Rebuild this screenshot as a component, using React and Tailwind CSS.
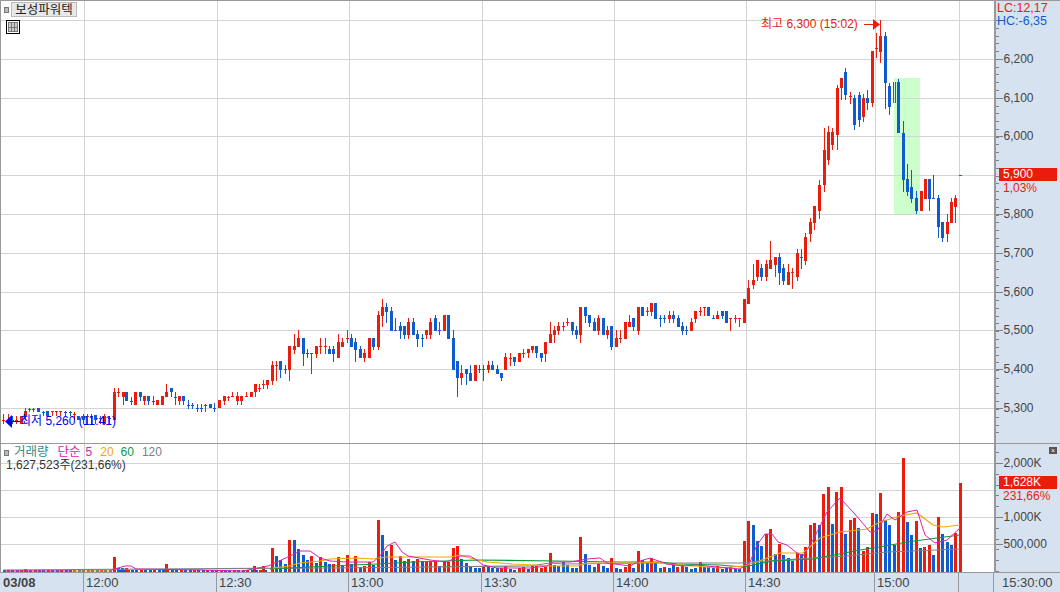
import React from 'react'

const RED = '#ec1c0c'
const BLUE = '#0e5ccf'

// candles: [u, color, bodyTop, bodyBottom, wickTop, wickBottom], u is 3x pixels from the segment base
const seg = (base, rows) => rows.map(([u, c, t, b, wt, wb]) => ({ x: Math.round(base + u / 3), c, t, b, wt: wt ?? t, wb: wb ?? b }))

const candles = [
  ...seg(0, [
    [9, 'r', 420, 420, 414, 424], [24, 'r', 420, 420, 414, 424], [36, 'b', 420, 420, 416, 424], [48, 'r', 420, 420, 416, 424], [62, 'r', 416, 424],
    [75, 'r', 411, 416, 408, 420], [87, 'r', 409, 409, 408, 412], [100, 'r', 409, 409, 408, 412], [114, 'b', 408, 412], [128, 'b', 412, 412, 411, 416],
    [142, 'b', 411, 416], [155, 'r', 411, 411, 411, 416], [167, 'r', 411, 411, 411, 416], [180, 'r', 411, 411, 411, 416], [195, 'b', 412, 412, 411, 416],
    [209, 'b', 412, 412, 411, 416], [222, 'r', 414, 414, 412, 420], [235, 'b', 416, 420], [248, 'b', 416, 420, 414, 424], [260, 'r', 416, 416, 414, 424],
    [272, 'b', 416, 416, 414, 424], [285, 'b', 415, 420, 415, 424], [299, 'b', 418, 418, 416, 424], [312, 'r', 416, 424, 414, 425], [326, 'b', 418, 418, 416, 424],
  ]),
  ...seg(100, [
    [41, 'r', 392, 420, 388, 420], [53, 'r', 392, 392, 388, 397], [68, 'r', 392, 397, 392, 405], [79, 'b', 392, 401], [92, 'b', 401, 401, 397, 405],
    [106, 'r', 392, 405], [119, 'b', 392, 397, 392, 401], [133, 'r', 396, 401, 396, 405], [145, 'b', 396, 401, 396, 405], [160, 'b', 401, 401, 396, 405],
    [172, 'r', 400, 405], [185, 'r', 396, 405], [199, 'r', 392, 397, 384, 397], [212, 'b', 388, 392, 388, 397], [226, 'b', 397, 397, 392, 405],
    [238, 'r', 396, 401, 396, 405], [250, 'b', 396, 401, 396, 405], [265, 'b', 405, 405, 400, 409], [277, 'b', 405, 405, 403, 409], [291, 'b', 408, 408, 404, 412],
    [304, 'b', 408, 408, 404, 412], [316, 'r', 405, 405, 404, 412], [331, 'b', 404, 408, 404, 408], [343, 'b', 408, 408, 403, 412], [358, 'r', 400, 408],
    [371, 'r', 396, 401, 396, 405], [385, 'r', 397, 397, 396, 401], [397, 'r', 396, 396, 392, 397], [410, 'r', 396, 401, 392, 405], [424, 'r', 396, 401, 396, 405],
    [437, 'r', 396, 396, 392, 397], [452, 'r', 392, 397], [464, 'r', 384, 392, 384, 397], [476, 'r', 388, 388, 384, 392], [490, 'r', 384, 384, 380, 389],
  ]),
  ...seg(260, [
    [22, 'r', 380, 385, 380, 389], [37, 'r', 365, 381, 361, 385], [49, 'r', 365, 365, 361, 381], [61, 'b', 361, 370, 361, 378], [76, 'b', 369, 369, 365, 374],
    [88, 'r', 346, 370, 346, 381], [103, 'r', 346, 350, 334, 354], [115, 'r', 338, 347, 330, 347], [130, 'b', 338, 354, 338, 366], [142, 'b', 353, 353, 349, 358],
    [154, 'b', 353, 353, 353, 374], [169, 'r', 346, 354, 346, 358], [181, 'r', 346, 346, 338, 354], [196, 'r', 346, 346, 338, 354], [208, 'b', 349, 354, 346, 354],
    [220, 'b', 349, 354, 346, 362], [235, 'r', 342, 358, 334, 358], [247, 'r', 342, 347, 338, 347], [262, 'r', 338, 338, 330, 343], [274, 'b', 338, 347, 334, 347],
    [286, 'b', 342, 350, 338, 362], [301, 'b', 349, 358, 346, 358], [313, 'r', 353, 358, 349, 362], [328, 'r', 338, 358], [340, 'b', 338, 347, 338, 350],
    [355, 'r', 315, 347, 311, 350], [367, 'r', 307, 316, 299, 327], [379, 'b', 307, 312, 303, 323], [394, 'b', 311, 331, 307, 331], [406, 'b', 330, 330, 318, 331],
    [421, 'b', 326, 331, 322, 339], [433, 'b', 326, 335, 326, 339], [445, 'r', 322, 335, 318, 339], [460, 'b', 322, 335, 318, 335], [472, 'b', 334, 339, 330, 347],
    [487, 'b', 338, 338, 334, 347], [499, 'r', 330, 335, 330, 339], [511, 'r', 322, 335, 318, 339], [526, 'b', 318, 331, 315, 331], [538, 'b', 330, 330, 322, 335],
    [553, 'r', 315, 331], [565, 'b', 315, 339], [580, 'b', 338, 370, 330, 370], [592, 'b', 361, 378, 361, 397], [604, 'r', 373, 378, 365, 385],
    [619, 'b', 369, 374, 369, 385], [631, 'b', 373, 381, 365, 381], [646, 'r', 365, 381], [658, 'b', 369, 369, 365, 373], [670, 'b', 369, 369, 365, 381],
    [685, 'r', 365, 370, 361, 373], [697, 'b', 365, 370, 361, 370], [712, 'b', 369, 374, 365, 374], [724, 'b', 373, 378, 373, 381],
  ]),
  ...seg(500, [
    [16, 'r', 357, 370, 353, 370], [31, 'r', 358, 358, 353, 366], [43, 'b', 357, 362, 357, 366], [58, 'r', 353, 362], [70, 'r', 353, 353, 349, 358],
    [85, 'r', 349, 353, 349, 358], [97, 'r', 346, 350, 346, 353], [109, 'b', 346, 353, 346, 358], [124, 'b', 353, 358, 353, 362], [136, 'r', 342, 354, 342, 362],
    [151, 'r', 334, 343, 322, 343], [163, 'r', 330, 335, 326, 343], [175, 'r', 326, 331, 322, 335], [190, 'r', 326, 326, 322, 331], [202, 'r', 322, 322, 318, 326],
    [217, 'b', 322, 331, 322, 335], [229, 'b', 330, 335, 326, 339], [241, 'r', 307, 335, 307, 343], [256, 'b', 307, 316, 307, 323], [268, 'b', 315, 323, 315, 327],
    [283, 'b', 322, 331, 318, 331], [295, 'r', 318, 331, 315, 335], [310, 'b', 318, 335], [322, 'r', 330, 335, 326, 339], [334, 'b', 326, 347, 326, 350],
    [349, 'r', 338, 347, 330, 347], [361, 'r', 338, 338, 330, 343], [376, 'r', 322, 339], [388, 'r', 322, 327, 315, 327], [400, 'b', 318, 327, 318, 331],
    [415, 'r', 307, 331, 307, 335], [427, 'b', 307, 316], [442, 'r', 311, 311, 307, 316], [454, 'r', 303, 312, 303, 316], [466, 'b', 303, 319],
    [481, 'b', 318, 318, 315, 327], [493, 'b', 318, 318, 315, 323], [508, 'r', 315, 319, 311, 323], [520, 'b', 315, 319, 311, 323], [535, 'b', 318, 327, 315, 327],
    [547, 'b', 326, 331, 322, 335], [559, 'b', 330, 330, 326, 335], [574, 'r', 322, 331, 318, 331], [586, 'r', 311, 319, 311, 323], [601, 'r', 311, 311, 307, 316],
    [613, 'r', 307, 307, 307, 316], [625, 'b', 307, 316], [640, 'b', 318, 318, 315, 319], [652, 'r', 315, 319, 311, 319], [667, 'b', 311, 316, 311, 319],
    [679, 'b', 311, 323], [691, 'r', 318, 318, 318, 331], [706, 'r', 318, 318, 315, 323], [718, 'r', 318, 318, 318, 327],
  ]),
  ...seg(730, [
    [43, 'r', 299, 323], [55, 'r', 288, 304, 280, 304], [70, 'r', 280, 285, 264, 289], [82, 'r', 260, 277, 260, 281], [94, 'b', 268, 277, 264, 281],
    [109, 'r', 264, 277, 260, 281], [121, 'r', 260, 269, 241, 269], [136, 'r', 257, 265, 257, 277], [148, 'b', 257, 273, 253, 285], [160, 'b', 268, 281, 264, 285],
    [175, 'r', 272, 285, 264, 285], [187, 'r', 272, 272, 268, 289], [202, 'r', 253, 277, 249, 281], [214, 'b', 257, 257, 249, 269], [226, 'r', 237, 261, 233, 265],
    [241, 'r', 222, 234, 218, 242], [253, 'r', 206, 223, 206, 230], [268, 'r', 185, 211, 180, 219],
  ]),
  ...seg(820, [
    [12, 'r', 150, 185, 128, 192], [25, 'r', 132, 160, 126, 165], [37, 'r', 132, 145, 128, 150], [51, 'r', 88, 135, 85, 150], [64, 'r', 78, 88, 78, 100],
    [76, 'b', 72, 95, 68, 100], [90, 'r', 96, 96, 92, 104], [103, 'b', 98, 125, 95, 130], [117, 'b', 95, 120, 92, 127],
  ]),
  ...seg(860, [
    [10, 'r', 98, 117, 94, 122], [22, 'b', 98, 103, 90, 110], [36, 'r', 51, 103, 51, 107], [49, 'r', 48, 48, 33, 58], [61, 'r', 36, 52, 20, 63],
    [76, 'b', 36, 83, 32, 109], [88, 'b', 86, 107, 83, 115], [115, 'b', 82, 133, 79, 133], [130, 'b', 133, 180, 121, 192], [142, 'b', 179, 192, 164, 196],
    [154, 'b', 187, 199, 170, 203], [169, 'b', 198, 211, 191, 214], [182, 'r', 191, 211], [196, 'r', 179, 199], [208, 'b', 179, 199, 179, 211],
    [220, 'b', 198, 198, 175, 199], [235, 'b', 198, 227, 195, 238], [247, 'b', 222, 238, 222, 242], [262, 'r', 222, 234, 214, 242], [274, 'r', 202, 223, 198, 223],
    [286, 'r', 198, 207, 195, 223], [300, 'r', 175, 175, 175, 176],
  ]),
]

// volume bars: [x, color, top]
const bars = [
  [25, 'r', 569], [114, 'r', 557], [118, 'b', 568], [122, 'b', 568], [126, 'r', 568], [166, 'r', 564], [254, 'r', 566], [263, 'r', 566], [272, 'r', 548], [276, 'b', 556],
  [280, 'b', 560], [285, 'b', 564], [289, 'r', 540], [294, 'b', 540], [298, 'b', 549], [303, 'b', 555], [307, 'b', 560], [311, 'r', 556], [316, 'b', 563], [320, 'r', 557],
  [325, 'b', 562], [329, 'b', 564], [333, 'r', 564], [338, 'r', 557], [342, 'b', 566], [347, 'r', 555], [351, 'b', 564], [355, 'r', 556], [360, 'b', 567], [364, 'r', 566],
  [369, 'r', 562], [373, 'b', 565], [378, 'r', 520], [382, 'b', 535], [386, 'b', 551], [391, 'r', 545], [395, 'b', 560], [400, 'r', 556], [404, 'b', 561], [408, 'r', 559],
  [413, 'b', 561], [417, 'r', 559], [422, 'b', 561], [426, 'r', 562], [430, 'r', 562], [435, 'r', 561], [439, 'b', 566], [444, 'r', 561], [448, 'r', 562], [453, 'r', 548],
  [457, 'r', 546], [461, 'b', 559], [466, 'b', 563], [470, 'b', 567], [475, 'b', 568], [479, 'b', 568], [483, 'r', 566], [488, 'b', 566], [492, 'b', 568], [497, 'b', 568],
  [501, 'r', 568], [505, 'r', 566], [510, 'b', 569], [514, 'b', 570], [519, 'r', 568], [523, 'r', 567], [528, 'b', 569], [532, 'r', 566], [536, 'r', 566], [541, 'r', 568],
  [545, 'r', 567], [550, 'r', 553], [554, 'b', 565], [558, 'b', 566], [563, 'b', 562], [567, 'b', 565], [572, 'b', 568], [576, 'b', 568], [580, 'r', 537], [585, 'b', 554],
  [589, 'b', 565], [594, 'b', 567], [598, 'r', 563], [603, 'b', 566], [607, 'b', 568], [611, 'r', 558], [616, 'b', 568], [620, 'b', 569], [625, 'r', 567], [629, 'r', 564],
  [633, 'b', 568], [638, 'r', 551], [642, 'b', 560], [647, 'b', 563], [651, 'r', 558], [655, 'b', 563], [660, 'b', 568], [664, 'r', 567], [669, 'b', 568], [673, 'b', 565],
  [677, 'r', 567], [682, 'r', 565], [686, 'b', 567], [691, 'b', 569], [695, 'b', 568], [700, 'r', 562], [704, 'b', 567], [708, 'b', 567], [713, 'b', 568], [717, 'r', 566],
  [722, 'b', 569], [726, 'b', 568], [730, 'r', 567], [735, 'b', 569], [739, 'b', 569], [744, 'r', 541], [748, 'r', 521], [753, 'b', 525], [757, 'b', 541], [761, 'b', 546],
  [766, 'r', 534], [770, 'r', 529], [775, 'b', 554], [779, 'r', 544], [783, 'b', 555], [788, 'b', 558], [792, 'b', 561], [797, 'r', 553], [801, 'b', 554], [805, 'r', 547],
  [810, 'r', 525], [814, 'r', 523], [819, 'b', 525], [823, 'r', 494], [828, 'r', 487], [832, 'b', 524], [836, 'r', 492], [841, 'r', 487], [845, 'b', 534], [850, 'r', 520],
  [854, 'r', 518], [858, 'b', 528], [863, 'r', 551], [867, 'r', 547], [872, 'r', 513], [876, 'b', 514], [880, 'r', 493], [885, 'b', 520], [889, 'b', 525], [894, 'b', 545],
  [898, 'r', 512], [903, 'r', 458], [907, 'b', 522], [911, 'b', 535], [916, 'r', 521], [920, 'b', 548], [924, 'r', 547], [929, 'r', 545], [933, 'b', 555], [938, 'r', 517],
  [942, 'b', 534], [947, 'b', 542], [951, 'b', 545], [955, 'r', 533], [960, 'r', 483],
]

const pts = (a) => a.map(([x, y]) => `${x},${y}`).join(' ')

const ma5 = [[112, 570], [118, 568], [125, 566], [131, 566], [136, 569], [200, 570], [243, 571], [268, 566], [277, 562], [290, 556], [300, 551], [310, 551], [320, 558], [330, 561], [347, 562], [363, 562], [373, 562], [380, 556], [387, 546], [395, 542], [402, 552], [408, 556], [430, 560], [447, 562], [455, 558], [460, 556], [470, 556], [478, 561], [483, 565], [497, 568], [530, 568], [547, 566], [553, 562], [570, 562], [587, 559], [600, 558], [607, 563], [630, 566], [640, 561], [650, 558], [667, 564], [683, 566], [697, 565], [717, 567], [740, 569], [750, 562], [757, 545], [765, 534], [772, 534], [778, 542], [787, 545], [797, 553], [803, 556], [813, 540], [827, 512], [840, 498], [853, 512], [860, 520], [870, 532], [877, 531], [887, 514], [895, 520], [907, 512], [917, 510], [925, 535], [935, 543], [947, 540], [960, 528]]
const ma20 = [[273, 568], [289, 566], [300, 563], [320, 561], [330, 559], [357, 558], [373, 559], [387, 557], [450, 557], [460, 555], [470, 558], [487, 562], [513, 564], [533, 565], [547, 566], [577, 566], [587, 563], [610, 563], [630, 563], [660, 562], [667, 564], [693, 566], [720, 568], [743, 566], [757, 562], [780, 553], [803, 553], [820, 538], [840, 532], [867, 529], [880, 522], [900, 516], [917, 513], [933, 525], [943, 527], [960, 525]]
const ma60 = [[270, 569], [330, 566], [377, 564], [413, 562], [477, 560], [557, 561], [617, 562], [660, 562], [677, 564], [720, 565], [743, 567], [773, 561], [813, 559], [860, 550], [880, 547], [907, 542], [937, 538], [960, 535]]
const ma120 = [[3, 570], [330, 568], [530, 566], [550, 563], [563, 564], [660, 563], [740, 563], [750, 562], [813, 558], [847, 556], [887, 552], [960, 549]]

const priceGrid = [20, 59, 98, 136, 175, 214, 253, 292, 330, 369, 408]
const priceLabels = [[59, '6,200'], [98, '6,100'], [136, '6,000'], [214, '5,800'], [253, '5,700'], [292, '5,600'], [330, '5,500'], [369, '5,400'], [408, '5,300']]
const timeGrid = [84, 217, 349, 482, 614, 746, 875, 959]
const volumeGrid = [463, 490, 517, 544]
const volumeLabels = [[463, '2,000K'], [517, '1,000K'], [544, '500,000']]
const priceTicks = Array.from({ length: 54 }, (_, i) => Math.round(20 + i * 7.78))
const volumeTicks = Array.from({ length: 12 }, (_, i) => Math.round(571 - i * 10.8))

const timeCells = [
  ['w-[84px]', '03/08', 'font-bold pl-[3px]'],
  ['w-[133px]', '12:00', ''],
  ['w-[132px]', '12:30', ''],
  ['w-[133px]', '13:00', ''],
  ['w-[132px]', '13:30', ''],
  ['w-[132px]', '14:00', ''],
  ['w-[129px]', '14:30', ''],
  ['w-[84px]', '15:00', ''],
  ['w-[35px]', '', ''],
]

function Candle({ x, c, t, b, wt, wb }) {
  const fill = c === 'r' ? RED : BLUE
  return (
    <g fill={fill}>
      <rect x={x} y={wt} width="1" height={Math.max(wb - wt, 1)} />
      <rect x={x - 1} y={t} width="3" height={Math.max(b - t, 1)} />
    </g>
  )
}

function PriceChart() {
  return (
    <svg viewBox="1 1 993 442" width="993" height="442" className="block" shapeRendering="crispEdges">
      <rect x="894" y="78" width="26" height="136" fill="#ccffcc" />
      {priceGrid.map((y) => <rect key={y} x="1" y={y} width="993" height="1" fill="#d4d4d4" />)}
      {timeGrid.map((x) => <rect key={x} x={x} y="1" width="1" height="442" fill="#d4d4d4" />)}
      {candles.map((d, i) => <Candle key={i} {...d} />)}
      <rect x="893" y="82" width="1" height="21" fill={RED} />
      <rect x="895" y="82" width="1" height="21" fill={RED} />
      <rect x="864" y="24" width="10" height="1" fill={RED} />
      <polygon points="873,19 880,24.5 873,30" fill={RED} shapeRendering="auto" />
      <rect x="10" y="421" width="10" height="1" fill="#0000ee" />
      <polygon points="12,415 5,421.5 12,428" fill="#0000ee" shapeRendering="auto" />
    </svg>
  )
}

function VolumeChart() {
  return (
    <svg viewBox="1 444 993 128" width="993" height="128" className="block">
      <g shapeRendering="crispEdges">
        {volumeGrid.map((y) => <rect key={y} x="1" y={y} width="993" height="1" fill="#d4d4d4" />)}
        {timeGrid.map((x) => <rect key={x} x={x} y="444" width="1" height="128" fill="#d4d4d4" />)}
        {Array.from({ length: 60 }, (_, i) => (
          <rect key={i} x={Math.round(2.5 + i * 4.43)} y="570" width="3" height="2" fill={i % 3 === 1 ? RED : BLUE} />
        ))}
        {bars.map(([x, c, top]) => <rect key={x} x={x - 1} y={top} width="3" height={572 - top} fill={c === 'r' ? RED : BLUE} />)}
      </g>
      <polyline points={pts(ma120)} fill="none" stroke="#808080" strokeWidth="1.2" />
      <polyline points={pts([[6, 571], [72, 571]])} fill="none" stroke="#e020b0" strokeWidth="1.2" />
      <polyline points={pts([[72, 571], [112, 571]])} fill="none" stroke="#f0a800" strokeWidth="1.2" />
      <polyline points={pts([[136, 569.5], [203, 569.5]])} fill="none" stroke="#f0a800" strokeWidth="1.2" />
      <polyline points={pts(ma60)} fill="none" stroke="#0a9a3c" strokeWidth="1.2" />
      <polyline points={pts(ma20)} fill="none" stroke="#f0a800" strokeWidth="1.2" />
      <polyline points={pts(ma5)} fill="none" stroke="#e020b0" strokeWidth="1" />
    </svg>
  )
}

function AxisScale({ height, top, ticks, labels }) {
  return (
    <svg viewBox={`0 ${top} 64 ${height}`} width="64" height={height} className="block">
      <g shapeRendering="crispEdges" fill="#808080">
        {ticks.map((y) => <rect key={y} x="0" y={y} width="3" height="1" />)}
        {labels.map(([y]) => <rect key={y} x="0" y={y} width="7" height="1" />)}
      </g>
      {labels.map(([y, t]) => (
        <text key={y} x="7.5" y={y + 3.5} fontSize="12" fill="#444">{t}</text>
      ))}
    </svg>
  )
}

function Tag({ value, sub, top }) {
  return (
    <div className={`absolute left-[3px] w-[58px] ${top}`}>
      <div className="h-[13px] bg-[#ec1c0c] pl-[4px] text-[12px] leading-[13px] text-white">{value}</div>
      <div className="pl-[4px] text-[12px] leading-[14px] text-[#ec1c0c]">{sub}</div>
    </div>
  )
}

export default function App() {
  return (
    <div className="flex h-[592px] w-[1060px] flex-col overflow-hidden bg-white font-['Liberation_Sans','Noto_Sans_CJK_KR',sans-serif]">
      {/* price panel */}
      <div className="flex h-[443px] border-t border-[#999]">
        <div className="relative w-[994px] border-l border-[#999]">
          <PriceChart />
          <div className="absolute left-[3px] top-[1px] flex items-center gap-[2px]">
            <span className="h-[6px] w-[5px] border border-[#777] bg-[#bbb]" />
            <span className="flex h-[15px] w-[66px] items-center justify-center border border-[#bbb] bg-[#e8e8e8] font-['Noto_Sans_CJK_KR',sans-serif] text-[12.5px] leading-none text-[#222]">보성파워텍</span>
          </div>
          <div className="absolute left-[5px] top-[19px] flex h-[14px] w-[14px] items-center justify-center border border-black bg-white">
            <div className="grid h-[10px] w-[10px] grid-cols-3 gap-px bg-[#777] p-px">
              {Array.from({ length: 6 }, (_, i) => <span key={i} className="bg-[#ccc]" />)}
            </div>
          </div>
          <div className="absolute left-[760px] top-[16px] text-[12px] leading-[14px] text-[#ec1c0c]">최고 6,300 (15:02)</div>
          <div className="absolute left-[19px] top-[413px] text-[12px] leading-[14px] text-[#0000ee]">최저 5,260 (11:41)</div>
        </div>
        <div className="relative w-[66px] border-l-2 border-[#999] bg-[#d6e2f0]">
          <AxisScale top={1} height={442} ticks={priceTicks} labels={priceLabels} />
          <div className="absolute left-[1px] top-[1px] text-[12.5px] leading-[13px]">
            <div className="text-[#ec1c0c]">LC:12,17</div>
            <div className="text-[#0e5ccf]">HC:-6,35</div>
          </div>
          <Tag value="5,900" sub="1,03%" top="top-[167px]" />
        </div>
      </div>

      {/* volume panel */}
      <div className="flex h-[129px] border-t border-[#999]">
        <div className="relative w-[994px] border-l border-[#999]">
          <VolumeChart />
          <div className="absolute left-[3px] top-[2px] text-[12px] leading-[13px]">
            <div className="flex items-center">
              <span className="mr-[5px] h-[6px] w-[5px] border border-[#777] bg-[#bbb]" />
              <span className="mr-[9px] text-[12.5px] text-[#2e8b8b]">거래량</span>
              <span className="mr-[5px] text-[12.5px] text-[#e020b0]">단순</span>
              <span className="mr-[8px] text-[#e020b0]">5</span>
              <span className="mr-[7px] text-[#f0a800]">20</span>
              <span className="mr-[8px] text-[#0a9a3c]">60</span>
              <span className="text-[#808080]">120</span>
            </div>
            <div className="ml-[2px] text-[#333]">1,627,523주(231,66%)</div>
          </div>
        </div>
        <div className="relative w-[66px] border-l-2 border-[#999] bg-[#d6e2f0]">
          <AxisScale top={444} height={128} ticks={volumeTicks} labels={volumeLabels} />
          <span className="absolute left-[53px] top-[3px] flex h-[7px] w-[8px] items-center justify-center bg-[#555] text-[7px] leading-none text-white">×</span>
          <Tag value="1,628K" sub="231,66%" top="top-[32px]" />
        </div>
      </div>

      {/* time axis */}
      <div className="flex h-[20px] border-t border-[#999] bg-[#d6e2f0] text-[13px] leading-[19px] text-[#444]">
        {timeCells.map(([w, label, extra], i) => (
          <div key={i} className={`${w} border-r border-[#999] pl-[2px] ${extra}`}>{label}</div>
        ))}
        <div className="pl-[8px]">15:30:00</div>
      </div>
    </div>
  )
}
